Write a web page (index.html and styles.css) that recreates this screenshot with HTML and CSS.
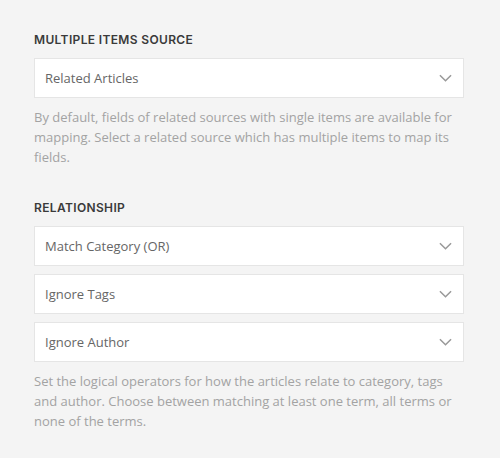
FILE: index.html
```html
<!DOCTYPE html>
<html>
<head>
<meta charset="utf-8">
<link rel="stylesheet" href="styles.css">
</head>
<body>
<div class="panel">
  <section class="group">
    <h3 class="label">Multiple Items Source</h3>
    <div class="select"><span>Related Articles</span><svg class="chev" viewBox="0 0 14 8"><path d="M1 1l6 6 6-6"/></svg></div>
    <p class="help">By default, fields of related sources with single items are available for mapping. Select a related source which has multiple items to map its fields.</p>
  </section>
  <section class="group">
    <h3 class="label">Relationship</h3>
    <div class="stack">
      <div class="select"><span>Match Category (OR)</span><svg class="chev" viewBox="0 0 14 8"><path d="M1 1l6 6 6-6"/></svg></div>
      <div class="select"><span>Ignore Tags</span><svg class="chev" viewBox="0 0 14 8"><path d="M1 1l6 6 6-6"/></svg></div>
      <div class="select"><span>Ignore Author</span><svg class="chev" viewBox="0 0 14 8"><path d="M1 1l6 6 6-6"/></svg></div>
    </div>
    <p class="help">Set the logical operators for how the articles relate to category, tags and author. Choose between matching at least one term, all terms or none of the terms.</p>
  </section>
</div>
</body>
</html>
```
FILE: styles.css
```css
html, body { margin: 0; padding: 0; background: #f4f4f4; }
body { font-family: "Open Sans", "Liberation Sans", sans-serif; }
.panel { padding: 32px 36px 0 34px; display: flex; flex-direction: column; gap: 33px; }
.group { display: flex; flex-direction: column; }
.label {
  margin: 0 0 10px;
  font-family: Inter, "Liberation Sans", sans-serif;
  font-weight: 600;
  font-size: 12px;
  line-height: 16px;
  letter-spacing: 0.35px;
  text-transform: uppercase;
  color: #3a3a3a;
}
.stack { display: flex; flex-direction: column; gap: 8px; }
.select {
  height: 38px;
  border: 1px solid #e5e5e5;
  background: #fff;
  display: flex;
  align-items: center;
  justify-content: space-between;
  padding: 0 11px 0 10px;
  font-size: 13px;
  color: #666;
}
.chev { width: 13px; height: 8px; fill: none; stroke: #999; stroke-width: 1.6; }
.help { margin: 9px 0 0; font-size: 13px; line-height: 20px; color: #a3a3a3; }
```
